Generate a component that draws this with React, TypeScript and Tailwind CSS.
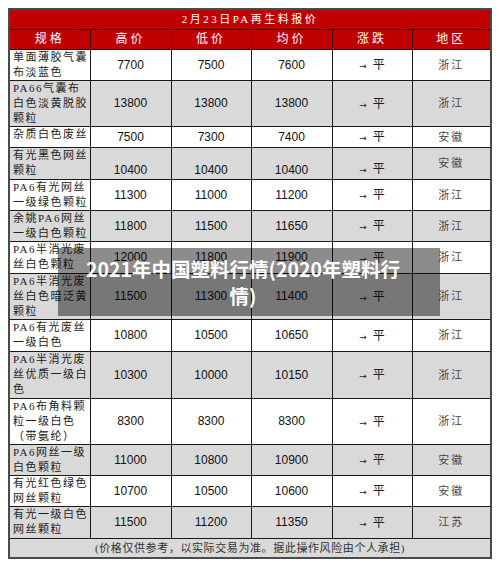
const rows = [
  { name: ["单面薄胶气囊", "布淡蓝色"], hi: "7700", lo: "7500", avg: "7600", area: "浙江", h: "h-[31px]" },
  { name: ["PA66气囊布", "白色淡黄脱胶", "颗粒"], hi: "13800", lo: "13800", avg: "13800", area: "浙江", h: "h-[46px]" },
  { name: ["杂质白色废丝"], hi: "7500", lo: "7300", avg: "7400", area: "安徽", h: "h-[21px]" },
  { name: ["有光黑色网丝", "颗粒"], hi: "10400", lo: "10400", avg: "10400", area: "安徽", h: "h-[32px]", bottom: true },
  { name: ["PA6有光网丝", "一级绿色颗粒"], hi: "11300", lo: "11000", avg: "11200", area: "浙江", h: "h-[31px]" },
  { name: ["余姚PA6网丝", "一级白色颗粒"], hi: "11800", lo: "11500", avg: "11650", area: "浙江", h: "h-[30px]" },
  { name: ["PA6半消光废", "丝白色颗粒"], hi: "12000", lo: "11800", avg: "11900", area: "浙江", h: "h-[32px]" },
  { name: ["PA6半消光废", "丝白色暗泛黄", "颗粒"], hi: "11500", lo: "11300", avg: "11400", area: "浙江", h: "h-[46px]" },
  { name: ["PA6有光废丝", "一级白色"], hi: "10800", lo: "10500", avg: "10650", area: "浙江", h: "h-[32px]" },
  { name: ["PA6半消光废", "丝优质一级白", "色"], hi: "10300", lo: "10000", avg: "10150", area: "浙江", h: "h-[47px]" },
  { name: ["PA6布角料颗", "粒一级白色", "（带氨纶）"], hi: "8300", lo: "8300", avg: "8300", area: "浙江", h: "h-[46px]" },
  { name: ["PA6网丝一级", "白色颗粒"], hi: "11000", lo: "10800", avg: "10900", area: "安徽", h: "h-[31px]" },
  { name: ["有光红色绿色", "网丝颗粒"], hi: "10700", lo: "10500", avg: "10600", area: "安徽", h: "h-[31px]" },
  { name: ["有光一级白色", "网丝颗粒"], hi: "11500", lo: "11200", avg: "11350", area: "江苏", h: "h-[32px]" },
];

const headers = ["规格", "高价", "低价", "均价", "涨跌", "地区"];

const cjk = "font-['Liberation_Serif','Noto_Sans_CJK_SC',serif]";
const num = "font-['Liberation_Sans',Arial,sans-serif]";

export default function App() {
  return (
    <div className="relative w-[500px] h-[566px] bg-white pt-[8px] pl-[8px]">
      <table className="table-fixed border-collapse w-[482px] border-2 border-[#4a4a4a]">
        <colgroup>
          <col className="w-[81px]" />
          <col className="w-[81px]" />
          <col className="w-[80px]" />
          <col className="w-[81px]" />
          <col className="w-[80px]" />
          <col className="w-[79px]" />
        </colgroup>
        <thead>
          <tr className="h-[20px] bg-[#c00000]">
            <th
              colSpan={6}
              className={`${cjk} border border-[#3a0000] text-white text-[11px] leading-[14px] font-normal tracking-[2.5px] text-center p-0`}
            >
              2月23日PA再生料报价
            </th>
          </tr>
          <tr className="h-[20px] bg-[#c00000]">
            {headers.map((h) => (
              <th
                key={h}
                className={`${cjk} border border-[#3a0000] text-white text-[12px] leading-[14px] font-normal tracking-[3px] text-center p-0`}
              >
                {h}
              </th>
            ))}
          </tr>
        </thead>
        <tbody>
          {rows.map((r, i) => {
            const bg = i % 2 === 1 ? "bg-[#d9d9d9]" : "bg-white";
            const va = r.bottom ? "align-bottom pb-[2px]" : "align-middle";
            return (
              <tr key={i} className={`${r.h} ${bg}`}>
                <td className={`${cjk} border border-[#1a1a1a] text-[11px] leading-[15px] tracking-[1.5px] text-[#222] pl-[3px] pr-0 py-0 align-top`}>
                  {r.name.map((l) => (
                    <div key={l} className="whitespace-nowrap">
                      {l}
                    </div>
                  ))}
                </td>
                {[r.hi, r.lo, r.avg].map((v, j) => (
                  <td key={j} className={`${num} ${va} border border-[#1a1a1a] text-[12px] leading-[14px] text-[#111] text-center p-0`}>
                    {v}
                  </td>
                ))}
                <td className={`${va} border border-[#1a1a1a] text-center text-[#222] leading-[14px] p-0`}>
                  <span className="font-['DejaVu_Sans',sans-serif] text-[9px] mr-[6px]">→</span>
                  <span className={`${cjk} text-[12px]`}>平</span>
                </td>
                <td className={`${cjk} align-middle border border-[#1a1a1a] text-center text-[11px] leading-[14px] tracking-[2px] text-[#444] p-0`}>
                  {r.area}
                </td>
              </tr>
            );
          })}
          <tr className="h-[20px] bg-[#d9d9d9]">
            <td
              colSpan={6}
              className={`${cjk} border border-[#1a1a1a] text-center text-[11px] leading-[14px] tracking-[0.6px] text-[#333] p-0`}
            >
              (价格仅供参考，以实际交易为准。据此操作风险由个人承担)
            </td>
          </tr>
        </tbody>
      </table>

      <div className="absolute left-[58px] top-[248px] w-[382px] h-[68px] bg-black/45 flex flex-col items-center justify-center pr-[12px]">
        <div className="font-['Noto_Sans_CJK_SC',sans-serif] font-bold text-white text-[19.5px] leading-[27px] text-center">
          2021年中国塑料行情(2020年塑料行
          <br />
          情)
        </div>
      </div>
    </div>
  );
}
